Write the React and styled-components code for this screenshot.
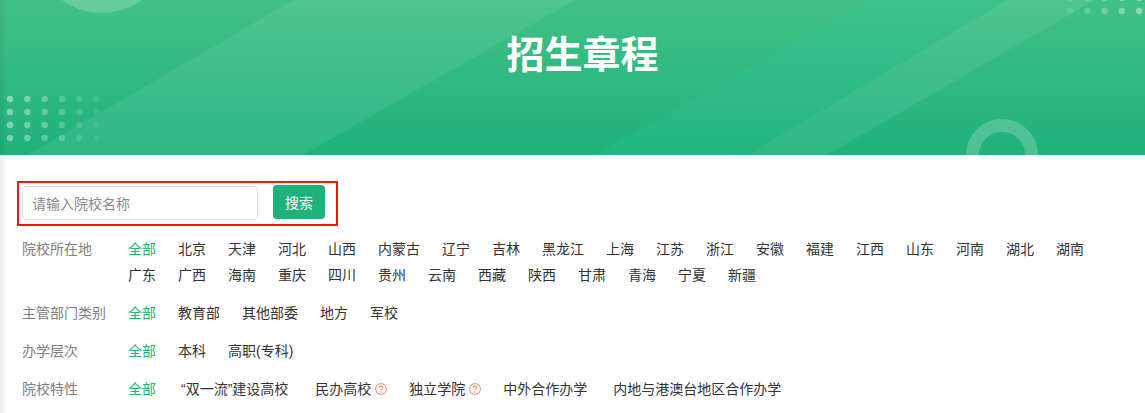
import React from 'react'
import styled, { createGlobalStyle } from 'styled-components'

const provinces = [
  '全部', '北京', '天津', '河北', '山西', '内蒙古', '辽宁', '吉林', '黑龙江', '上海', '江苏', '浙江', '安徽', '福建', '江西', '山东', '河南', '湖北', '湖南',
  '广东', '广西', '海南', '重庆', '四川', '贵州', '云南', '西藏', '陕西', '甘肃', '青海', '宁夏', '新疆',
].map((text) => ({ text }))

const plain = (list) => list.map((text) => ({ text }))

const filters = [
  { label: '院校所在地', items: provinces },
  { label: '主管部门类别', items: plain(['全部', '教育部', '其他部委', '地方', '军校']) },
  { label: '办学层次', items: plain(['全部', '本科', '高职(专科)']) },
  {
    label: '院校特性',
    items: [
      { text: '全部' },
      { text: '“双一流”建设高校', left: 3, right: 5 },
      { text: '民办高校', help: true },
      { text: '独立学院', help: true },
      { text: '中外合作办学', right: 4 },
      { text: '内地与港澳台地区合作办学' },
    ],
  },
]

const Dots = ({ x, y, cols, rows, fadeLeft }) => {
  const dots = []
  for (let r = 0; r < rows; r++) {
    for (let c = 0; c < cols; c++) {
      const t = c / (cols - 1)
      dots.push(
        <circle
          key={r + '-' + c}
          cx={x + c * 17.3}
          cy={y + r * 13}
          r="3.2"
          fill="#fff"
          opacity={fadeLeft ? 0.1 + t * 0.3 : 0.42 - t * 0.34}
        />
      )
    }
  }
  return <g>{dots}</g>
}

const BannerArt = () => (
  <ArtSvg viewBox="0 0 1145 155" width="1145" height="155">
    <polygon points="28,155 293,0 575,0 303,155" fill="#fff" opacity="0.07" />
    <polygon points="595,155 867,0 1007,0 747,155" fill="#2fd0a5" opacity="0.16" />
    <polygon points="747,155 1007,0 1095,0 827,155" fill="#fff" opacity="0.07" />
    <circle cx="102" cy="-55" r="68" fill="#fff" opacity="0.2" />
    <circle cx="1002" cy="155" r="29.5" fill="none" stroke="#fff" strokeWidth="13" opacity="0.2" />
    <Dots x={10} y={99} cols={6} rows={4} />
    <Dots x={1070} y={-2} cols={5} rows={2} fadeLeft />
  </ArtSvg>
)

const Help = () => (
  <HelpIcon viewBox="0 0 12 12" width="12" height="12">
    <circle cx="6" cy="6" r="5.4" fill="none" stroke="#f39a80" strokeWidth="1.1" />
    <path d="M4.3 4.7c0-1 .8-1.6 1.7-1.6s1.7.6 1.7 1.5c0 1.2-1.7 1.3-1.7 2.6" fill="none" stroke="#ef8f5f" strokeWidth="1.1" />
    <circle cx="6" cy="9" r=".75" fill="#ef8f5f" />
  </HelpIcon>
)

export default function App() {
  return (
    <Page>
      <GlobalStyle />
      <EdgeShade />
      <Banner>
        <BannerArt />
        <Title>招生章程</Title>
      </Banner>
      <Content>
        <SearchBox>
          <SearchInput placeholder="请输入院校名称" />
          <SearchButton>搜索</SearchButton>
        </SearchBox>
        {filters.map((f) => (
          <FilterRow key={f.label}>
            <FilterLabel>{f.label}</FilterLabel>
            <Options>
              {f.items.map((item, i) => (
                <Option key={item.text} $active={i === 0} $left={item.left} $right={item.right}>
                  {item.text}
                  {item.help && <Help />}
                </Option>
              ))}
            </Options>
          </FilterRow>
        ))}
      </Content>
    </Page>
  )
}

const GlobalStyle = createGlobalStyle`
  html, body {
    margin: 0;
    padding: 0;
    background: #fff;
    overflow: hidden;
  }
  body {
    font-family: "Liberation Sans", "Noto Sans CJK SC", sans-serif;
  }
`

const Page = styled.div`
  position: relative;
  width: 1145px;
  height: 413px;
  overflow: hidden;
`

const EdgeShade = styled.div`
  position: absolute;
  left: 0;
  top: 0;
  bottom: 0;
  width: 7px;
  z-index: 2;
  background: linear-gradient(to right, rgba(0, 0, 0, 0.07), rgba(0, 0, 0, 0));
`

const Banner = styled.div`
  position: relative;
  height: 155px;
  display: flex;
  justify-content: center;
  padding: 27px 0 0 20px;
  box-sizing: border-box;
  background: linear-gradient(to bottom, #42c187, #1fb27a);
  overflow: hidden;
`

const ArtSvg = styled.svg`
  position: absolute;
  left: 0;
  top: 0;
`

const Title = styled.h1`
  position: relative;
  margin: 0;
  font-size: 38px;
  line-height: 56px;
  font-weight: 700;
  color: #fff;
`

const Content = styled.div`
  padding: 26px 22px 0;
`

const SearchBox = styled.div`
  display: flex;
  align-items: flex-start;
  gap: 15px;
  box-sizing: border-box;
  width: 321px;
  height: 45px;
  margin: 0 0 10px -5px;
  padding: 2px 0 0 3px;
  border: 2px solid #f5150f;
`

const SearchInput = styled.input`
  box-sizing: border-box;
  width: 236px;
  height: 34px;
  margin-top: 1px;
  padding: 0 9px;
  border: 1px solid #dcdfe6;
  border-radius: 4px;
  outline: none;
  font: 14px "Noto Sans CJK SC", sans-serif;
  color: #333;

  &::placeholder {
    color: #8a8a8a;
    opacity: 1;
  }
`

const SearchButton = styled.button`
  width: 52px;
  height: 34px;
  padding: 0;
  border: 0;
  border-radius: 4px;
  background: #1fb27a;
  color: #fff;
  font: 14px "Noto Sans CJK SC", sans-serif;
`

const FilterRow = styled.div`
  display: flex;
  align-items: flex-start;
  margin-bottom: 12px;
`

const FilterLabel = styled.div`
  flex: none;
  width: 106px;
  font-size: 14px;
  line-height: 26px;
  color: #808080;
`

const Options = styled.div`
  display: flex;
  flex-wrap: wrap;
  column-gap: 22px;
  width: 990px;
`

const Option = styled.span`
  display: inline-flex;
  align-items: center;
  margin-left: ${(p) => p.$left || 0}px;
  margin-right: ${(p) => p.$right || 0}px;
  font-size: 14px;
  line-height: 26px;
  color: ${(p) => (p.$active ? '#1fb27a' : '#333')};
`

const HelpIcon = styled.svg`
  margin-left: 4px;
`
